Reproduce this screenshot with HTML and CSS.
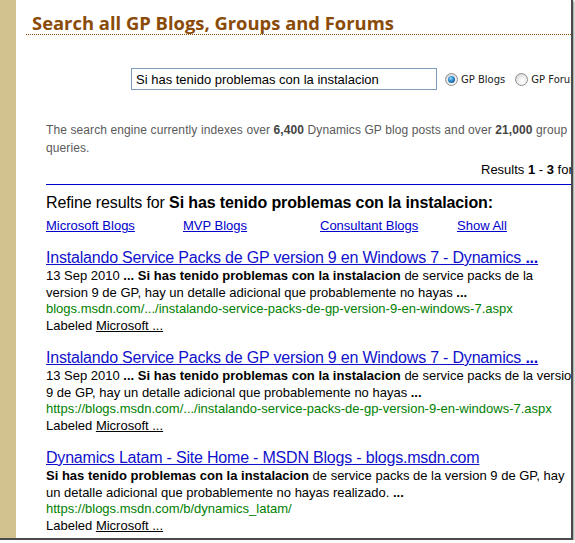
FILE: index.html
```html
<!DOCTYPE html>
<html lang="en">
<head>
<meta charset="utf-8">
<title>Search all GP Blogs, Groups and Forums</title>
<link rel="stylesheet" href="styles.css">
</head>
<body>
<div class="shot">
  <div class="side"></div>
  <div class="page">
    <h2 class="heading">Search all GP Blogs, Groups and Forums</h2>

    <div class="search-row">
      <input class="search-box" type="text" value="Si has tenido problemas con la instalacion">
      <span class="opt"><span class="radio on"></span>GP Blogs</span>
      <span class="opt"><span class="radio"></span>GP Forums</span>
    </div>

    <p class="desc">The search engine currently indexes over <b>6,400</b> Dynamics GP blog posts and over <b>21,000</b> group queries.</p>

    <div class="count">Results <b>1</b> - <b>3</b> for <b>Si has tenido problemas con la instalacion</b></div>
    <div class="rule"></div>

    <div class="refine">Refine results for <b>Si has tenido problemas con la instalacion:</b></div>
    <div class="tabs">
      <a class="tab" href="#">Microsoft Blogs</a>
      <a class="tab" href="#">MVP Blogs</a>
      <a class="tab" href="#">Consultant Blogs</a>
      <a class="tab" href="#">Show All</a>
    </div>

    <div class="result">
      <a class="r-title" href="#">Instalando Service Packs de GP version 9 en Windows 7 - Dynamics <b>...</b></a>
      <div class="r-snippet r1">13 Sep 2010 <b>...</b> <b>Si has tenido problemas con la instalacion</b> de service packs de la version 9 de GP, hay un detalle adicional que probablemente no hayas <b>...</b></div>
      <div class="r-url">blogs.msdn.com/.../instalando-service-packs-de-gp-version-9-en-windows-7.aspx</div>
      <div class="r-label">Labeled <a class="r-tag" href="#">Microsoft ...</a></div>
    </div>

    <div class="result">
      <a class="r-title" href="#">Instalando Service Packs de GP version 9 en Windows 7 - Dynamics <b>...</b></a>
      <div class="r-snippet r2">13 Sep 2010 <b>...</b> <b>Si has tenido problemas con la instalacion</b> de service packs de la version 9 de GP, hay un detalle adicional que probablemente no hayas <b>...</b></div>
      <div class="r-url">https://blogs.msdn.com/.../instalando-service-packs-de-gp-version-9-en-windows-7.aspx</div>
      <div class="r-label">Labeled <a class="r-tag" href="#">Microsoft ...</a></div>
    </div>

    <div class="result">
      <a class="r-title" href="#">Dynamics Latam - Site Home - MSDN Blogs - blogs.msdn.com</a>
      <div class="r-snippet r3"><b>Si has tenido problemas con la instalacion</b> de service packs de la version 9 de GP, hay un detalle adicional que probablemente no hayas realizado. <b>...</b></div>
      <div class="r-url">https://blogs.msdn.com/b/dynamics_latam/</div>
      <div class="r-label">Labeled <a class="r-tag" href="#">Microsoft ...</a></div>
    </div>
  </div>
</div>
</body>
</html>
```

FILE: styles.css
```css
html, body {
  margin: 0;
  padding: 0;
  background: #ffffff;
}

body {
  font-family: "Liberation Sans", Arial, sans-serif;
  color: #000;
}

.shot {
  display: flex;
  width: 573px;
  height: 540px;
  box-sizing: border-box;
  border-right: 2px solid #4a4a4a;
  border-bottom: 2px solid #4a4a4a;
  box-shadow: 1px 1px 2px rgba(0, 0, 0, 0.45);
  overflow: hidden;
  background: #fff;
}

.side {
  flex: none;
  width: 16px;
  background: #d1c290;
}

.page {
  flex: 1;
  min-width: 0;
  overflow: hidden;
  background: #fff;
}

.heading {
  margin: 11px 0 0 10px;
  padding-left: 6px;
  font-family: "Open Sans", "DejaVu Sans", sans-serif;
  font-weight: bold;
  font-size: 18.4px;
  line-height: 23px;
  color: #8a4b08;
  border-bottom: 1px dotted #8a4b08;
  white-space: nowrap;
}

.search-row {
  display: flex;
  align-items: center;
  margin: 33px 0 0 115px;
  white-space: nowrap;
}

.search-row > * {
  flex: none;
}

.search-box {
  box-sizing: border-box;
  width: 306px;
  height: 22px;
  margin: 0;
  padding: 0 4px;
  border: 1px solid #7f9db9;
  font-family: "Liberation Sans", Arial, sans-serif;
  font-size: 13px;
  color: #000;
  background: #fff;
  outline: none;
}

.opt {
  display: inline-flex;
  align-items: center;
  gap: 3px;
  margin-left: 8px;
  font-family: "DejaVu Sans", sans-serif;
  font-size: 10px;
  color: #222;
}

.opt + .opt {
  margin-left: 10px;
}

.radio {
  position: relative;
  display: inline-block;
  box-sizing: border-box;
  width: 13px;
  height: 13px;
  border-radius: 50%;
  border: 1px solid #8e8f8f;
  background: radial-gradient(circle at 60% 65%, #ffffff 0%, #f0f0f0 40%, #c9c9c9 100%);
}

.radio.on::after {
  content: "";
  position: absolute;
  left: 2px;
  top: 2px;
  width: 7px;
  height: 7px;
  border-radius: 50%;
  background: radial-gradient(circle at 40% 35%, #8fd8ff 0%, #2a86c8 45%, #0d3d6e 100%);
}

.desc {
  width: 540px;
  margin: 31px 0 0 30px;
  font-size: 12px;
  line-height: 18px;
  letter-spacing: 0.1px;
  color: #5a5a5a;
}

.desc b {
  color: #444;
}

.count {
  margin: 4px 0 0 465px;
  font-size: 13px;
  line-height: 18px;
  white-space: nowrap;
}

.rule {
  margin: 5px 0 0 30px;
  height: 1px;
  background: #0000cc;
}

.refine {
  margin: 8px 0 0 30px;
  font-size: 16px;
  line-height: 20px;
  letter-spacing: -0.12px;
  white-space: nowrap;
}

.tabs {
  display: grid;
  grid-template-columns: repeat(4, 137px);
  margin: 5px 0 0 30px;
  font-size: 13px;
  line-height: 16px;
}

.tab {
  color: #0000cc;
  text-decoration: underline;
}

.result {
  margin: 14px 0 0 30px;
}

.r-title {
  display: block;
  font-size: 16px;
  line-height: 20px;
  letter-spacing: -0.2px;
  color: #1111cc;
  text-decoration: underline;
  white-space: nowrap;
}

.r-snippet {
  font-size: 13px;
  line-height: 16.5px;
  color: #000;
}

.r-snippet.r1 {
  width: 500px;
}

.r-snippet.r2 {
  width: 537px;
}

.r-snippet.r3 {
  width: 525px;
}

.r-url {
  font-size: 13px;
  line-height: 16.5px;
  color: #008000;
  white-space: nowrap;
}

.r-label {
  font-size: 13px;
  line-height: 16.5px;
  color: #000;
}

.r-tag {
  color: #000;
  text-decoration: underline;
}
```
